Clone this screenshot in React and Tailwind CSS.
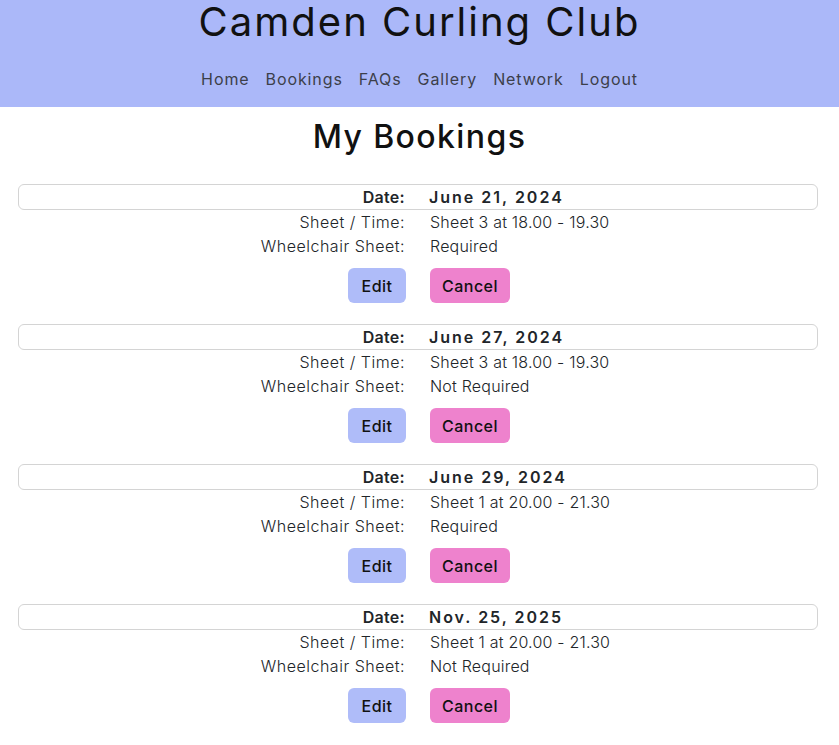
import React from "react";

const bookings = [
  { date: "June 21, 2024", sheet: "Sheet 3 at 18.00 - 19.30", wc: "Required" },
  { date: "June 27, 2024", sheet: "Sheet 3 at 18.00 - 19.30", wc: "Not Required" },
  { date: "June 29, 2024", sheet: "Sheet 1 at 20.00 - 21.30", wc: "Required" },
  { date: "Nov. 25, 2025", sheet: "Sheet 1 at 20.00 - 21.30", wc: "Not Required" },
];

function Booking({ b }) {
  return (
    <div className="ml-[18px] w-[800px] pb-[21px]">
      <div className="grid grid-cols-2 rounded-[6px] border border-[#d4d4d4] leading-[24px]">
        <div className="pr-[13px] text-right font-semibold tracking-[0.3px]">Date:</div>
        <div className="pl-[11px] font-semibold tracking-[2px]">{b.date}</div>
      </div>
      <div className="grid grid-cols-2 leading-[24px] font-light tracking-[0.5px]">
        <div className="pr-[13px] text-right">Sheet / Time:</div>
        <div className="pl-[12px] tracking-[0.2px]">{b.sheet}</div>
      </div>
      <div className="grid grid-cols-2 leading-[24px] font-light tracking-[0.5px]">
        <div className="pr-[13px] text-right">Wheelchair Sheet:</div>
        <div className="pl-[12px] tracking-[0.2px]">{b.wc}</div>
      </div>
      <div className="mt-[10px] grid grid-cols-2">
        <div className="flex justify-end pr-[12px]">
          <button className="h-[35px] w-[58px] rounded-[6px] bg-[#afbcf9] font-medium tracking-[0.5px] text-[#111]">Edit</button>
        </div>
        <div className="flex justify-start pl-[12px]">
          <button className="h-[35px] w-[80px] rounded-[6px] bg-[#ee82cd] font-medium tracking-[0.5px] text-[#111]">Cancel</button>
        </div>
      </div>
    </div>
  );
}

export default function App() {
  return (
    <div className="min-h-[745px] bg-white text-[16px] text-[#212529]" style={{ fontFamily: "Inter, 'Noto Sans', sans-serif" }}>
      <header className="h-[107px] bg-[#abb8f9] text-center">
        <h1 className="text-[40px] leading-[44px] font-normal text-[#111] tracking-[2px]">Camden Curling Club</h1>
        <nav className="mt-[23px] flex justify-center gap-[16px] text-[16px] leading-[24px] tracking-[0.9px] text-[#3c3f4a]">
          <span>Home</span>
          <span>Bookings</span>
          <span>FAQs</span>
          <span>Gallery</span>
          <span>Network</span>
          <span>Logout</span>
        </nav>
      </header>
      <h2 className="mt-[11px] mb-[28px] text-center text-[32px] leading-[38px] font-medium tracking-[1.4px] text-[#111]">My Bookings</h2>
      {bookings.map((b, i) => (
        <Booking key={i} b={b} />
      ))}
    </div>
  );
}
